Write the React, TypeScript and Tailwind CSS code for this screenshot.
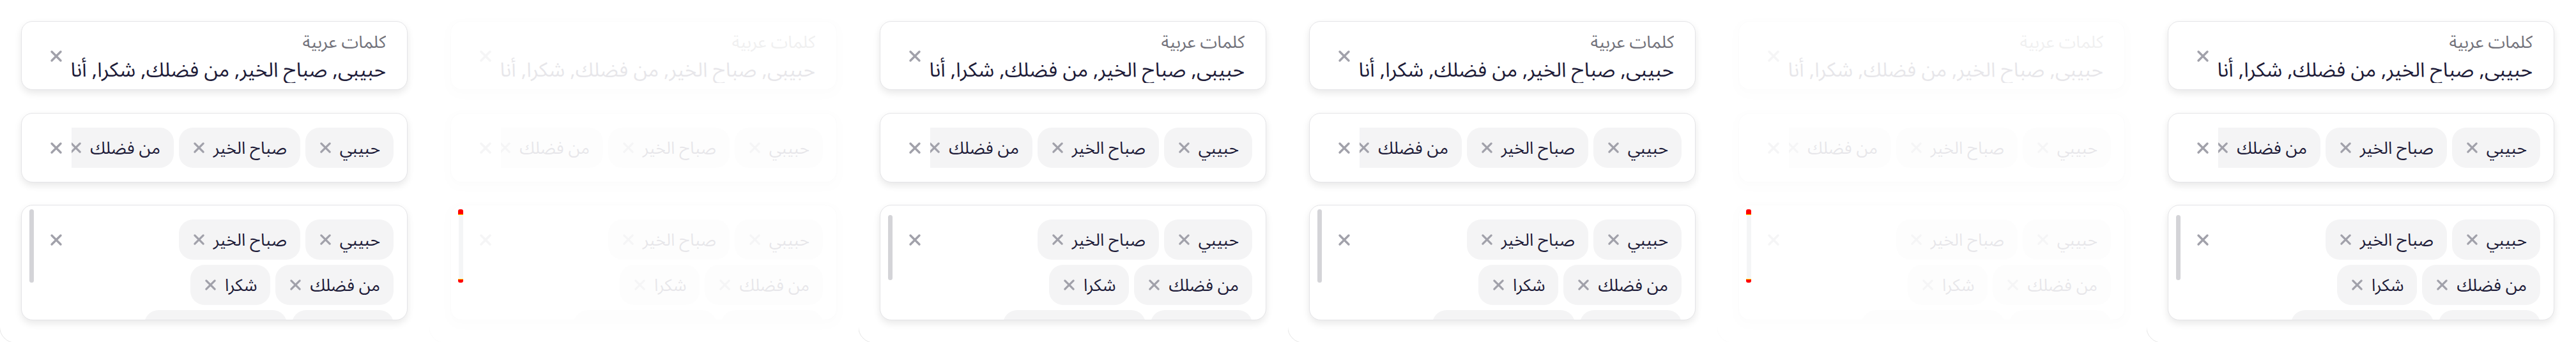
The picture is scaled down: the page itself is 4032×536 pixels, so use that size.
import React from "react";

const words = ["حبيبي", "صباح الخير", "من فضلك", "شكرا"];

const CloseIcon = ({ className = "" }: { className?: string }) => (
  <svg viewBox="0 0 20 20" className={className} fill="none" aria-hidden>
    <path d="M3 3L17 17M17 3L3 17" stroke="currentColor" strokeWidth="3.4" strokeLinecap="round" />
  </svg>
);

const Chip = ({ label, width = "" }: { label: string; width?: string }) => (
  <div className={`flex h-[63px] shrink-0 items-center justify-between gap-[13px] rounded-[22px] bg-[#f4f4f5] pl-[22px] pr-[21px] ${width}`}>
    <span className="mt-[4px] whitespace-nowrap text-[26.5px] leading-none text-[#1d1b38]">{label}</span>
    <CloseIcon className="h-[19px] w-[19px] text-[#a1a1aa]" />
  </div>
);

const cardClass =
  "w-[605px] shrink-0 rounded-[18px] border border-[#e4e4e7] bg-white shadow-[0_5px_12px_rgba(0,0,0,0.09)]";

const TextCard = () => (
  <div dir="rtl" className={`${cardClass} flex h-[108px] items-start gap-[14px] pl-[44px] pr-[33px] pt-[16px]`}>
    <div className="flex min-w-0 flex-1 flex-col overflow-hidden">
      <span className="text-[27px] leading-[34px] text-[#71717a]">كلمات عربية</span>
      <span className="mt-[6px] whitespace-nowrap text-[31.5px] leading-[40px] text-[#1d1b38]">
        {words.join(", ")}, أنا
      </span>
    </div>
    <CloseIcon className="mt-[28px] h-[20px] w-[20px] shrink-0 text-[#a1a1aa]" />
  </div>
);

const SingleLineCard = () => (
  <div dir="rtl" className={`${cardClass} mt-px flex h-[109px] items-center gap-[14px] pl-[44px] pr-[21px]`}>
    <div className="flex min-w-0 flex-1 gap-[8px] overflow-hidden">
      {words.map((w) => (
        <Chip key={w} label={w} />
      ))}
    </div>
    <CloseIcon className="h-[20px] w-[20px] shrink-0 text-[#a1a1aa]" />
  </div>
);

const MultiLineCard = ({ thumbTop, thumbH, faded }: { thumbTop: string; thumbH: string; faded?: boolean }) => (
  <div dir="rtl" className={`${cardClass} relative flex h-[181px] items-start justify-between overflow-hidden pl-[44px] pr-[21px] pt-[22px]`}>
    <div className="flex w-[440px] flex-wrap gap-[8px]">
      {words.map((w) => (
        <Chip key={w} label={w} />
      ))}
      <Chip label="مرحبا" width="w-[159px]" />
      <Chip label="مع السلامة" width="w-[223px]" />
    </div>
    <CloseIcon className="mt-[22px] h-[20px] w-[20px] shrink-0 text-[#a1a1aa]" />
    {/* scrollbar thumb */}
    <div className={`absolute left-[12px] w-[7px] rounded-full ${faded ? "bg-[#9ca3af]" : "bg-[#d4d4d8]"} ${thumbTop} ${thumbH}`} />
  </div>
);

const Column = ({ faded, thumbTop, thumbH }: { faded?: boolean; thumbTop: string; thumbH: string }) => (
  <div className="relative h-[536px] w-[672px] shrink-0 overflow-hidden">
    <div
      className={`-ml-px -mt-[10px] flex h-[548px] w-[700px] flex-col gap-[35px] rounded-bl-[26px] border border-[#e6e6e6] pl-[33px] pt-[42px] ${
        faded ? "opacity-[0.1]" : ""
      }`}
    >
      <TextCard />
      <SingleLineCard />
      <MultiLineCard thumbTop={thumbTop} thumbH={thumbH} faded={faded} />
    </div>
    {faded && (
      <>
        <div className="absolute left-[45px] top-[328px] h-[9px] w-[8px] rounded-t-[3px] border-b border-[#ffee00] bg-[#ff0000]" />
        <div className="absolute left-[45px] top-[437px] h-[6px] w-[8px] rounded-b-[3px] border-t border-[#ffee00] bg-[#ff0000]" />
      </>
    )}
  </div>
);

export default function App() {
  return (
    <div className="flex h-[536px] w-[4032px] overflow-hidden bg-white font-['Noto_Sans_Arabic','Noto_Sans',sans-serif]">
      <Column thumbTop="top-[6px]" thumbH="h-[115px]" />
      <Column faded thumbTop="top-[6px]" thumbH="h-[115px]" />
      <Column thumbTop="top-[15px]" thumbH="h-[102px]" />
      <Column thumbTop="top-[6px]" thumbH="h-[115px]" />
      <Column faded thumbTop="top-[6px]" thumbH="h-[115px]" />
      <Column thumbTop="top-[15px]" thumbH="h-[102px]" />
    </div>
  );
}
